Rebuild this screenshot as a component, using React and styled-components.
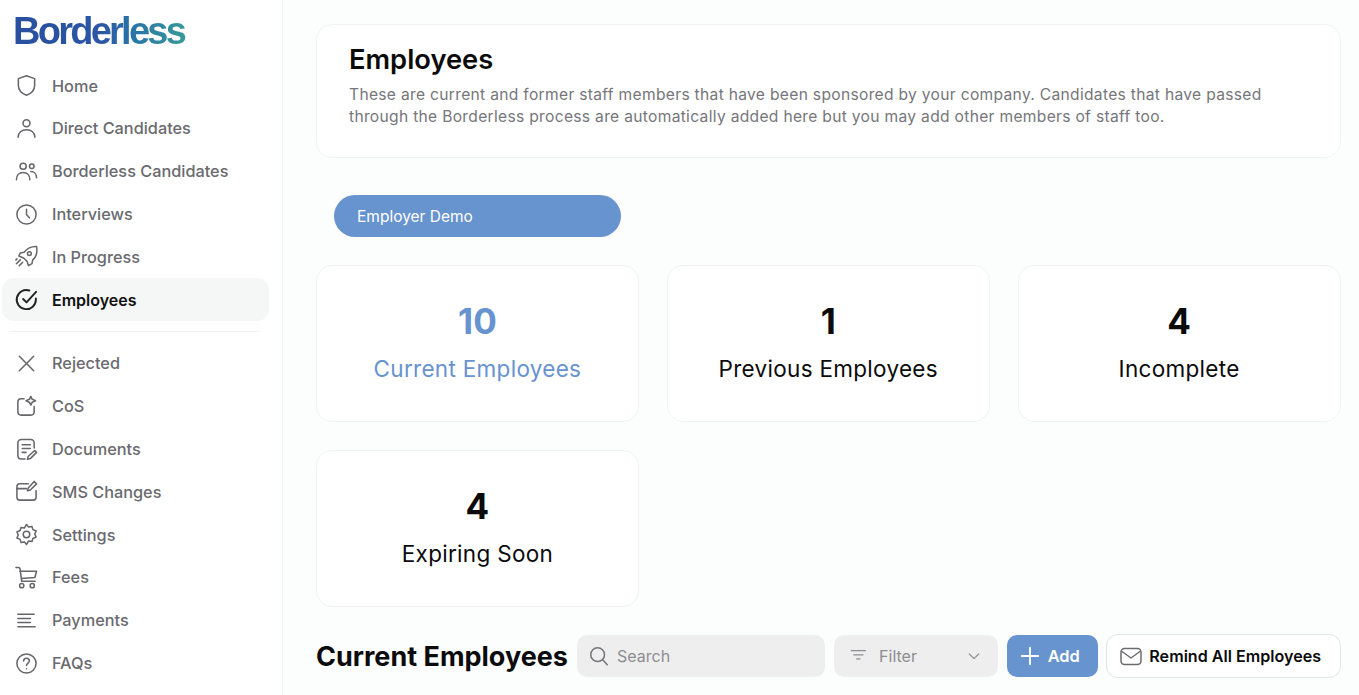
import React from "react";
import styled, { createGlobalStyle } from "styled-components";

const Global = createGlobalStyle`
  html, body { margin: 0; padding: 0; height: 100%; overflow: hidden; background: #fcfdfd; }
  * { box-sizing: border-box; }
  body { font-family: Inter, "Liberation Sans", sans-serif; }
`;

const Page = styled.div`
  display: flex;
  width: 1359px;
  height: 695px;
  overflow: hidden;
`;

const Sidebar = styled.aside`
  width: 283px;
  flex: none;
  background: #fff;
  border-right: 1px solid #f3f4f5;
  padding: 10px 13px 0 2px;
`;

const Logo = styled.div`
  margin: 0 0 12.3px 11px;
  height: 42px;
  font-family: "Liberation Sans", Arial, sans-serif;
  font-weight: 700;
  font-size: 38px;
  line-height: 42px;
  letter-spacing: -2.75px;
  width: 174px;
  background: linear-gradient(90deg, #2a4f9f 0%, #2b55a5 50%, #2a76a8 70%, #379a97 100%);
  -webkit-background-clip: text;
  background-clip: text;
  color: transparent;
`;

const NavList = styled.nav`
  display: flex;
  flex-direction: column;
`;

const NavItem = styled.div`
  height: 42.8px;
  display: flex;
  align-items: center;
  gap: 14px;
  padding-left: 13px;
  border-radius: 12px;
  font-size: ${(p) => (p.$active ? "16px" : "16.3px")};
  font-weight: ${(p) => (p.$active ? 600 : 500)};
  color: ${(p) => (p.$active ? "#111" : "#6a6a6f")};
  background: ${(p) => (p.$active ? "#f5f6f6" : "transparent")};
  svg { flex: none; color: ${(p) => (p.$active ? "#222" : "#66666b")}; }
`;

const Divider = styled.hr`
  border: 0;
  height: 1px;
  background: #eff0f1;
  margin: 10px 9px 10px 8px;
`;

const Main = styled.main`
  flex: 1;
  min-width: 0;
  padding: 24px 18.5px 0 33px;
  display: flex;
  flex-direction: column;
`;

const Card = styled.section`
  background: #fff;
  border: 1px solid #f1f2f3;
  border-radius: 16px;
`;

const Header = styled(Card)`
  height: 134px;
  padding: 17px 32px 0;
`;

const Title = styled.h1`
  margin: 0;
  font-size: 27.3px;
  line-height: 36px;
  font-weight: 600;
  color: #0b0b0c;
`;

const Description = styled.p`
  margin: 6px 0 0;
  font-size: 15.6px;
  line-height: 22.4px;
  letter-spacing: 0.31px;
  color: #76767b;
`;

const Pill = styled.div`
  margin: 37px 0 0 18px;
  width: 287px;
  height: 42px;
  border-radius: 21px;
  background: #6793cf;
  color: #fff;
  font-size: 15.5px;
  display: flex;
  align-items: center;
  padding-left: 23px;
`;

const StatGrid = styled.div`
  display: grid;
  grid-template-columns: repeat(3, minmax(0, 1fr));
  column-gap: 28px;
  row-gap: 28px;
  margin-top: 28px;
`;

const StatCard = styled(Card)`
  height: 157px;
  display: flex;
  flex-direction: column;
  align-items: center;
  padding-top: 33px;
  color: ${(p) => (p.$active ? "#6793cf" : "#0b0b0c")};
`;

const StatNumber = styled.div`
  font-size: 35px;
  line-height: 44px;
  font-weight: 700;
`;

const StatLabel = styled.div`
  margin-top: 9.5px;
  font-size: 22.5px;
  line-height: 32px;
  letter-spacing: 0.3px;
`;

const Toolbar = styled.div`
  display: flex;
  align-items: center;
  margin-top: 28px;
  height: 42px;
`;

const SectionTitle = styled.h2`
  margin: 0 9px 0 0;
  font-size: 27px;
  font-weight: 700;
  color: #0b0b0c;
  white-space: nowrap;
  width: 252px;
`;

const Field = styled.div`
  height: 42px;
  border-radius: 10px;
  background: #eeeeef;
  color: #8d8d91;
  display: flex;
  align-items: center;
  font-size: 16px;
`;

const SearchField = styled(Field)`
  width: 249px;
  padding-left: 11px;
  gap: 7px;
  margin-right: 9px;
  svg { color: #77777b; }
`;

const FilterField = styled(Field)`
  width: 164px;
  padding: 0 16px 0 16px;
  gap: 9px;
  margin-right: 9px;
  span { flex: 1; }
`;

const AddButton = styled.div`
  width: 92px;
  height: 42px;
  border-radius: 10px;
  background: #6793cf;
  color: #fff;
  font-size: 16.4px;
  font-weight: 600;
  display: flex;
  align-items: center;
  padding-left: 12px;
  gap: 7px;
  margin-right: 8px;
`;

const RemindButton = styled.div`
  width: 235px;
  height: 44px;
  border-radius: 12px;
  background: #fff;
  border: 1px solid #e4e5e7;
  color: #0b0b0c;
  font-size: 16.1px;
  font-weight: 600;
  display: flex;
  align-items: center;
  white-space: nowrap;
  padding-left: 12px;
  gap: 6px;
  svg { color: #6c6c70; }
`;

const Icon = ({ children, size = 24, w = 1.6 }) => (
  <svg width={size} height={size} viewBox="0 0 24 24" fill="none" stroke="currentColor" strokeWidth={w} strokeLinecap="round" strokeLinejoin="round">
    {children}
  </svg>
);

const icons = {
  home: <path d="M12 1.800 20.500 4.800v7c0 5-3.700 8.700-8.500 10.400-4.800-1.700-8.500-5.400-8.500-10.400v-7z" />,
  user: (<><circle cx="12" cy="6.500" r="3.600" /><path d="M3.200 21c0-4.800 3.900-7.600 8.800-7.600s8.800 2.800 8.800 7.600" /></>),
  users: (<><circle cx="8.500" cy="6.500" r="3.200" /><circle cx="17.500" cy="6.500" r="2.400" /><path d="M1.500 20.500c0-4.800 3-7.500 7-7.500s7 2.700 7 7.500M16.500 12c3.500 0 6 2.500 6 6.500" /></>),
  clock: (<><circle cx="12" cy="12" r="10" /><path d="M12 6.500V12l3 3.500" /></>),
  rocket: (<><path d="M22.500 1.500c-5.500-.3-9.500 1.700-13 6l-4 .8-1.500 3.200 5 2 3.500 3.500 1.500 4.500 3.700-2 .8-4c4.300-3.500 5-8 4-13.500z" /><circle cx="15" cy="9" r="2" /><path d="M5.500 15.500 1.500 19.500M8 18l-3.500 3.500M2 14.500l-1 1" /></>),
  check: (<><path d="M21.800 11v1A10 10 0 1 1 15 2.600" /><path d="M22 4 12 15l-3.500-3.500" /></>),
  x: <path d="M4.500 4.500l15 15M19.500 4.500l-15 15" />,
  cos: (<><path d="M9.500 4H6.500a3.500 3.500 0 0 0-3.500 3.500v10a3.500 3.500 0 0 0 3.500 3.500h10a3.500 3.500 0 0 0 3.500-3.500V12" /><path d="M16.500 1.500l1.500 3 3.500 1.500-3.500 1.500-1.500 3-1.500-3-3.500-1.500 3.500-1.500z" /></>),
  doc: (<><path d="M20 10.500V5a3.500 3.500 0 0 0-3.500-3.500H6.500A3.500 3.500 0 0 0 3 5v14a3.500 3.500 0 0 0 3.500 3h4" /><path d="M7.500 7h8.500M7.500 11h8.500M7.500 15h4" /><path d="M20.500 13l2 2-6.500 6.500-3 .8.700-3z" /></>),
  sms: (<><path d="M14 4H5a3 3 0 0 0-3 3v11a3 3 0 0 0 3 3h14a3 3 0 0 0 3-3v-7" /><path d="M2 9h10" /><path d="M20 1.500l2.500 2.500-6.500 6.500-3 .8.800-3z" /></>),
  gear: (<><circle cx="12" cy="12" r="3.400" /><path d="M12 1.500l2.200 2.800 3.500-.7 1 3.300 3.300 1.500-1.400 3.100 1.400 3.100-3.300 1.500-1 3.300-3.500-.7L12 22.500l-2.200-2.800-3.500.7-1-3.300L2 15.600 3.400 12.500 2 9.400l3.300-1.500 1-3.300 3.500.7z" /></>),
  cart: (<><path d="M1 1.500h2.700c.8 0 1.400.6 1.500 1.300L7 16h14M5 5.500h17.500l-1.800 6.500-14.200 1" /><circle cx="7" cy="20.500" r="2.200" /><circle cx="18" cy="20.500" r="2.200" /></>),
  lines: <path d="M3 5.500h17M3 10h13M3 14h13M3 18.500h18" />,
  faq: (<><circle cx="12" cy="12" r="10" /><path d="M9 9.500a3 3 0 0 1 6 0c0 2-3 2.300-3 4.500" /><path d="M12 17.500h.01" /></>),
};

const top = [
  ["home", "Home"],
  ["user", "Direct Candidates"],
  ["users", "Borderless Candidates"],
  ["clock", "Interviews"],
  ["rocket", "In Progress"],
  ["check", "Employees", true],
];
const bottom = [
  ["x", "Rejected"],
  ["cos", "CoS"],
  ["doc", "Documents"],
  ["sms", "SMS Changes"],
  ["gear", "Settings"],
  ["cart", "Fees"],
  ["lines", "Payments"],
  ["faq", "FAQs"],
];

const Row = ({ icon, label, active }) => (
  <NavItem $active={active}>
    <Icon size={23} w={active ? 2 : 1.6}>{icons[icon]}</Icon>
    {label}
  </NavItem>
);

const stats = [
  ["10", "Current Employees", true],
  ["1", "Previous Employees"],
  ["4", "Incomplete"],
  ["4", "Expiring Soon"],
];

export default function App() {
  return (
    <Page>
      <Global />
      <Sidebar>
        <Logo>Borderless</Logo>
        <NavList>
          {top.map(([i, l, a]) => <Row key={l} icon={i} label={l} active={a} />)}
          <Divider />
          {bottom.map(([i, l]) => <Row key={l} icon={i} label={l} />)}
        </NavList>
      </Sidebar>
      <Main>
        <Header>
          <Title>Employees</Title>
          <Description>
            These are current and former staff members that have been sponsored by your company. Candidates that have passed through the Borderless process are automatically added here but you may add other members of staff too.
          </Description>
        </Header>
        <Pill>Employer Demo</Pill>
        <StatGrid>
          {stats.map(([n, l, a]) => (
            <StatCard key={l} $active={a}>
              <StatNumber>{n}</StatNumber>
              <StatLabel>{l}</StatLabel>
            </StatCard>
          ))}
        </StatGrid>
        <Toolbar>
          <SectionTitle>Current Employees</SectionTitle>
          <SearchField>
            <Icon size={22} w={1.7}><circle cx="10.500" cy="10.500" r="7.500" /><path d="M16 16l5 5.500" /></Icon>
            Search
          </SearchField>
          <FilterField>
            <Icon size={20} w={1.5}><path d="M1.500 5.500h17M4.500 10.500h11M8 15.500h4" /></Icon>
            <span>Filter</span>
            <Icon size={16} w={1.7}><path d="M5 9l7 7 7-7" /></Icon>
          </FilterField>
          <AddButton>
            <Icon size={22} w={2}><path d="M12 3v18M3 12h18" /></Icon>
            Add
          </AddButton>
          <RemindButton>
            <Icon size={24} w={1.5}><rect x="2" y="4.500" width="20" height="16" rx="3.500" /><path d="M3 7.500l9 6.500 9-6.500" /></Icon>
            Remind All Employees
          </RemindButton>
        </Toolbar>
      </Main>
    </Page>
  );
}
